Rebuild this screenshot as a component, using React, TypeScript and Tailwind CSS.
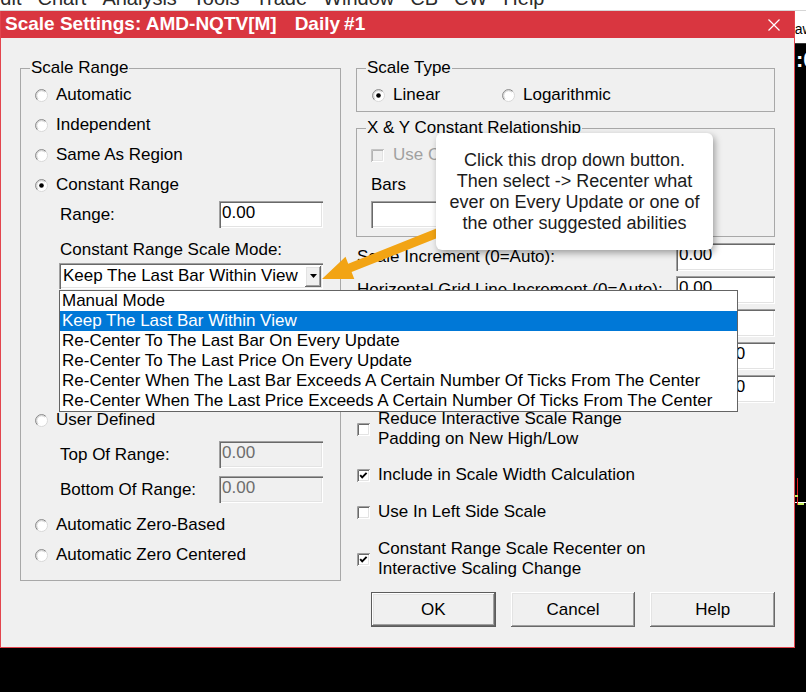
import React from 'react';

const sunken =
  'shadow-[inset_1px_1px_0_#a0a0a0,inset_2px_2px_0_#696969,inset_-1px_-1px_0_#ffffff,inset_-2px_-2px_0_#e3e3e3]';
const raised =
  'shadow-[inset_-1px_-1px_0_#696969,inset_1px_1px_0_#ffffff,inset_-2px_-2px_0_#a0a0a0,inset_2px_2px_0_#e3e3e3]';

const modes = [
  'Manual Mode',
  'Keep The Last Bar Within View',
  'Re-Center To The Last Bar On Every Update',
  'Re-Center To The Last Price On Every Update',
  'Re-Center When The Last Bar Exceeds A Certain Number Of Ticks From The Center',
  'Re-Center When The Last Price Exceeds A Certain Number Of Ticks From The Center',
];

function RadioDot({ checked = false }: { checked?: boolean }) {
  return (
    <svg width="13" height="13" viewBox="0 0 13 13" className="shrink-0">
      <circle cx="6.5" cy="6.5" r="6" fill="#ffffff" stroke="#d8d8d8" />
      <path d="M2.26 10.74 A6 6 0 0 1 10.74 2.26" fill="none" stroke="#858585" />
      <path d="M3.1 9.9 A4.8 4.8 0 0 1 9.9 3.1" fill="none" stroke="#c8c8c8" />
      {checked && <circle cx="6.5" cy="6.5" r="2.3" fill="#000000" />}
    </svg>
  );
}

function Radio({ label, checked = false }: { label: string; checked?: boolean }) {
  return (
    <div className="flex items-center h-[30px] whitespace-nowrap">
      <RadioDot checked={checked} />
      <span className="ml-[8px]">{label}</span>
    </div>
  );
}

function CheckBox({ checked = false, disabled = false }: { checked?: boolean; disabled?: boolean }) {
  return (
    <svg width="13" height="13" viewBox="0 0 13 13" className="shrink-0">
      <rect x="0" y="0" width="13" height="13" fill={disabled ? '#f0f0f0' : '#ffffff'} />
      <path d="M12.5 0V12.5H0" fill="none" stroke="#ffffff" />
      <path d="M11.5 1V11.5H1" fill="none" stroke="#e3e3e3" />
      <path d="M0.5 13V0.5H13" fill="none" stroke={disabled ? '#c4c4c4' : '#a0a0a0'} />
      <path d="M1.5 12V1.5H12" fill="none" stroke={disabled ? '#b4b4b4' : '#696969'} />
      {checked && <path d="M3.2 6.2 L5.2 8.4 L9.6 3.8" fill="none" stroke="#000000" strokeWidth="1.9" />}
    </svg>
  );
}

function Field({ value = '', disabled = false, className = '' }: { value?: string; disabled?: boolean; className?: string }) {
  return (
    <div
      className={`${sunken} ${disabled ? 'bg-[#f0f0f0] text-[#6d6d6d]' : 'bg-white'} pl-[3px] pt-[2px] leading-[19px] whitespace-nowrap overflow-hidden shrink-0 ${className}`}
    >
      {value}
    </div>
  );
}

function GroupBox({ title, className = '', children }: { title: string; className?: string; children: React.ReactNode }) {
  return (
    <fieldset className={`border border-[#a8a8a8] ${className}`}>
      <legend className="ml-[9px] px-[1px] leading-[20px] whitespace-nowrap">{title}</legend>
      {children}
    </fieldset>
  );
}

function CheckRow({ checked = false, children }: { checked?: boolean; children: React.ReactNode }) {
  return (
    <div className="flex items-center pl-[1px]">
      <CheckBox checked={checked} />
      <div className="ml-[8px] leading-[20px]">{children}</div>
    </div>
  );
}

function DialogButton({ label, isDefault = false }: { label: string; isDefault?: boolean }) {
  return (
    <button
      type="button"
      className={`w-[125px] h-[35px] flex items-center justify-center bg-[#f0f0f0] ${raised} ${isDefault ? 'border border-[#5c5c5c]' : ''}`}
    >
      {label}
    </button>
  );
}

function ValueRow({ label, value }: { label: string; value: string }) {
  return (
    <div className="flex items-center justify-between h-[28px] mt-[5px] first:mt-0">
      <span className="pl-[1px] whitespace-nowrap">{label}</span>
      <Field value={value} className="w-[99px] h-[28px]" />
    </div>
  );
}

function ScaleModeCombo() {
  return (
    <div className="relative ml-[24px] mt-[3px] w-[264px] h-[26px]">
      <div className={`${sunken} bg-white h-full flex items-center pl-[4px] pr-[2px]`}>
        <span className="flex-1 whitespace-nowrap leading-[20px]">Keep The Last Bar Within View</span>
        <div className={`${raised} bg-[#f0f0f0] w-[16px] h-[21px] flex items-center justify-center`}>
          <svg width="7" height="4" viewBox="0 0 7 4">
            <path d="M0 0H7L3.5 4Z" fill="#000000" />
          </svg>
        </div>
      </div>

      {/* open drop-down list */}
      <div className="absolute left-0 top-[27px] z-20 w-[679px] border border-[#646464] bg-white">
        {modes.map((m, i) => (
          <div
            key={m}
            className={`h-[20px] leading-[20px] pl-[2px] whitespace-nowrap ${i === 1 ? 'bg-[#0078d7] text-white' : ''}`}
          >
            {m}
          </div>
        ))}
      </div>
    </div>
  );
}

function ScaleRange() {
  return (
    <GroupBox title="Scale Range" className="w-[321px] shrink-0">
      <div className="pl-[14px] pt-[2px] pb-[10px]">
        <Radio label="Automatic" />
        <Radio label="Independent" />
        <Radio label="Same As Region" />
        <Radio label="Constant Range" checked />
        <div className="mt-[1px] flex items-center h-[27px] pl-[25px]">
          <span className="w-[159px]">Range:</span>
          <Field value="0.00" className="w-[104px] h-[27px]" />
        </div>
        <div className="mt-[12px] pl-[25px] leading-[20px]">Constant Range Scale Mode:</div>
        <ScaleModeCombo />
        <div className="mt-[116px]">
          <Radio label="User Defined" />
        </div>
        <div className="mt-[6px] flex items-center h-[27px] pl-[25px]">
          <span className="w-[159px]">Top Of Range:</span>
          <Field value="0.00" disabled className="w-[104px] h-[27px]" />
        </div>
        <div className="mt-[8px] flex items-center h-[27px] pl-[25px]">
          <span className="w-[159px]">Bottom Of Range:</span>
          <Field value="0.00" disabled className="w-[104px] h-[27px]" />
        </div>
        <div className="mt-[7px]">
          <Radio label="Automatic Zero-Based" />
        </div>
        <Radio label="Automatic Zero Centered" />
      </div>
    </GroupBox>
  );
}

function RightColumn() {
  return (
    <div className="ml-[15px] w-[419px] shrink-0">
      <GroupBox title="Scale Type">
        <div className="flex pl-[15px] pt-[2px] pb-[1px]">
          <div className="w-[130px]">
            <Radio label="Linear" checked />
          </div>
          <Radio label="Logarithmic" />
        </div>
      </GroupBox>

      <GroupBox title="X & Y Constant Relationship" className="mt-[6px]">
        <div className="pl-[14px] pt-[7px] pb-[8px]">
          <div className="flex items-center h-[20px]">
            <CheckBox disabled />
            <span className="ml-[9px] text-[#a0a0a0] whitespace-nowrap">Use Constant Relationship</span>
          </div>
          <div className="mt-[10px] leading-[20px]">Bars</div>
          <Field className="mt-[6px] w-[100px] h-[27px]" />
        </div>
      </GroupBox>

      <div className="mt-[6px]">
        <ValueRow label="Scale Increment (0=Auto):" value="0.00" />
        <ValueRow label="Horizontal Grid Line Increment (0=Auto):" value="0.00" />
        <ValueRow label="Range Tick Size:" value="0.00" />
        <ValueRow label="Recenter Ticks From Center:" value="1000000" />
        <ValueRow label="Interactive Range Padding:" value="1000000" />
      </div>

      <div className="mt-[6px]">
        <CheckRow>
          Reduce Interactive Scale Range
          <br />
          Padding on New High/Low
        </CheckRow>
        <div className="mt-[16px]">
          <CheckRow checked>Include in Scale Width Calculation</CheckRow>
        </div>
        <div className="mt-[17px]">
          <CheckRow>Use In Left Side Scale</CheckRow>
        </div>
        <div className="mt-[17px]">
          <CheckRow checked>
            Constant Range Scale Recenter on
            <br />
            Interactive Scaling Change
          </CheckRow>
        </div>
      </div>

      <div className="mt-[13px] pl-[15px] flex gap-[15px]">
        <DialogButton label="OK" isDefault />
        <DialogButton label="Cancel" />
        <DialogButton label="Help" />
      </div>
    </div>
  );
}

function MenuStrip() {
  const items = ['Edit', 'Chart', 'Analysis', 'Tools', 'Trade', 'Window', 'CB', 'CW', 'Help'];
  return (
    <div className="h-[11px] bg-white border-b border-[#d6d6d6] overflow-hidden">
      <div className="-mt-[14px] -ml-[13px] flex gap-[16px] text-[20px] leading-[24px] text-[#2b2b2b] whitespace-nowrap">
        {items.map((it) => (
          <span key={it}>{it}</span>
        ))}
      </div>
    </div>
  );
}

function ChartEdge() {
  return (
    <div className="w-[11px] h-[637px] flex flex-col overflow-hidden">
      <div className="h-[32px] bg-white overflow-hidden">
        <div className="pt-[10px] -ml-[15px] text-[14px] leading-[16px] whitespace-nowrap">Draw</div>
      </div>
      <div className="relative flex-1 bg-black border-t border-[#3a3a3a]">
        <div className="mt-[3px] ml-[1px] text-[22px] leading-[26px] font-bold text-white whitespace-nowrap">:0</div>
        {/* last price marker */}
        <div className="absolute left-0 top-[458px] w-[11px] h-px bg-white" />
        <div className="absolute left-[2px] top-[434px] w-px h-[27px] bg-[#e02020]" />
        <div className="absolute left-0 top-[451px] w-[3px] h-[2px] bg-[#c8f060]" />
        <div className="absolute left-[3px] top-[459px] w-[6px] h-[2px] bg-[#c8f060]" />
      </div>
    </div>
  );
}

export default function App() {
  return (
    <div className="relative w-[806px] h-[692px] overflow-hidden bg-black text-[17px] text-black font-['Liberation_Sans',Arial,Helvetica,sans-serif]">
      <MenuStrip />
      <div className="flex">
        <div className="w-[795px] h-[637px] flex flex-col border-x border-b border-[#e3454d] shrink-0">
          <div className="h-[27px] bg-[#d93640] flex items-center justify-between pl-[4px] pr-[14px] text-white">
            <div className="flex items-center text-[19px] font-bold whitespace-nowrap">
              <span>Scale Settings: AMD-NQTV[M]</span>
              <span className="ml-[18px]">Daily</span>
              <span className="ml-[4px]">#1</span>
            </div>
            <svg width="12" height="12" viewBox="0 0 12 12">
              <path d="M0.5 0.5L11.5 11.5M11.5 0.5L0.5 11.5" stroke="#ffffff" strokeWidth="1.2" />
            </svg>
          </div>
          <div className="flex-1 bg-[#f0f0f0] flex items-start pl-[19px] pt-[20px]">
            <ScaleRange />
            <RightColumn />
          </div>
        </div>
        <ChartEdge />
      </div>

      {/* pointer arrow from the note to the drop-down button */}
      <svg className="absolute left-0 top-0 z-30 pointer-events-none" width="806" height="692" viewBox="0 0 806 692">
        <polygon
          points="322,279 354.3,279 351.6,272.1 441.7,236.2 438.3,227.8 348.2,263.7 345.5,256.8"
          fill="#f2a414"
        />
      </svg>

      <div className="absolute left-[436px] top-[133px] z-40 w-[277px] h-[117px] rounded-[6px] bg-white shadow-[2px_3px_7px_rgba(0,0,0,0.35)] pt-[17px] text-center text-[18px] leading-[21px] text-[#1c1c1c]">
        Click this drop down button.
        <br />
        Then select -&gt; Recenter what
        <br />
        ever on Every Update or one of
        <br />
        the other suggested abilities
      </div>
    </div>
  );
}
